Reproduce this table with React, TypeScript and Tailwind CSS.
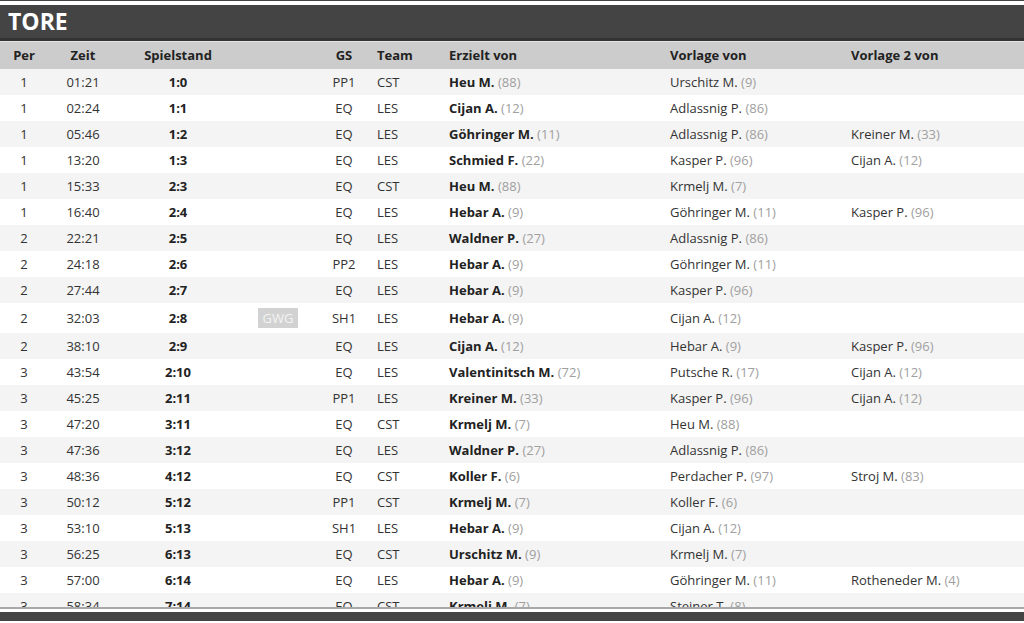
import React from "react";

type Player = [string, number];
type Goal = {
  per: number;
  time: string;
  score: string;
  gwg?: boolean;
  gs: string;
  team: string;
  scorer: Player;
  a1?: Player;
  a2?: Player;
};

const goals: Goal[] = [
  { per: 1, time: "01:21", score: "1:0", gs: "PP1", team: "CST", scorer: ["Heu M.", 88], a1: ["Urschitz M.", 9] },
  { per: 1, time: "02:24", score: "1:1", gs: "EQ", team: "LES", scorer: ["Cijan A.", 12], a1: ["Adlassnig P.", 86] },
  { per: 1, time: "05:46", score: "1:2", gs: "EQ", team: "LES", scorer: ["Göhringer M.", 11], a1: ["Adlassnig P.", 86], a2: ["Kreiner M.", 33] },
  { per: 1, time: "13:20", score: "1:3", gs: "EQ", team: "LES", scorer: ["Schmied F.", 22], a1: ["Kasper P.", 96], a2: ["Cijan A.", 12] },
  { per: 1, time: "15:33", score: "2:3", gs: "EQ", team: "CST", scorer: ["Heu M.", 88], a1: ["Krmelj M.", 7] },
  { per: 1, time: "16:40", score: "2:4", gs: "EQ", team: "LES", scorer: ["Hebar A.", 9], a1: ["Göhringer M.", 11], a2: ["Kasper P.", 96] },
  { per: 2, time: "22:21", score: "2:5", gs: "EQ", team: "LES", scorer: ["Waldner P.", 27], a1: ["Adlassnig P.", 86] },
  { per: 2, time: "24:18", score: "2:6", gs: "PP2", team: "LES", scorer: ["Hebar A.", 9], a1: ["Göhringer M.", 11] },
  { per: 2, time: "27:44", score: "2:7", gs: "EQ", team: "LES", scorer: ["Hebar A.", 9], a1: ["Kasper P.", 96] },
  { per: 2, time: "32:03", score: "2:8", gwg: true, gs: "SH1", team: "LES", scorer: ["Hebar A.", 9], a1: ["Cijan A.", 12] },
  { per: 2, time: "38:10", score: "2:9", gs: "EQ", team: "LES", scorer: ["Cijan A.", 12], a1: ["Hebar A.", 9], a2: ["Kasper P.", 96] },
  { per: 3, time: "43:54", score: "2:10", gs: "EQ", team: "LES", scorer: ["Valentinitsch M.", 72], a1: ["Putsche R.", 17], a2: ["Cijan A.", 12] },
  { per: 3, time: "45:25", score: "2:11", gs: "PP1", team: "LES", scorer: ["Kreiner M.", 33], a1: ["Kasper P.", 96], a2: ["Cijan A.", 12] },
  { per: 3, time: "47:20", score: "3:11", gs: "EQ", team: "CST", scorer: ["Krmelj M.", 7], a1: ["Heu M.", 88] },
  { per: 3, time: "47:36", score: "3:12", gs: "EQ", team: "LES", scorer: ["Waldner P.", 27], a1: ["Adlassnig P.", 86] },
  { per: 3, time: "48:36", score: "4:12", gs: "EQ", team: "CST", scorer: ["Koller F.", 6], a1: ["Perdacher P.", 97], a2: ["Stroj M.", 83] },
  { per: 3, time: "50:12", score: "5:12", gs: "PP1", team: "CST", scorer: ["Krmelj M.", 7], a1: ["Koller F.", 6] },
  { per: 3, time: "53:10", score: "5:13", gs: "SH1", team: "LES", scorer: ["Hebar A.", 9], a1: ["Cijan A.", 12] },
  { per: 3, time: "56:25", score: "6:13", gs: "EQ", team: "CST", scorer: ["Urschitz M.", 9], a1: ["Krmelj M.", 7] },
  { per: 3, time: "57:00", score: "6:14", gs: "EQ", team: "LES", scorer: ["Hebar A.", 9], a1: ["Göhringer M.", 11], a2: ["Rotheneder M.", 4] },
  { per: 3, time: "58:34", score: "7:14", gs: "EQ", team: "CST", scorer: ["Krmelj M.", 7], a1: ["Steiner T.", 8] },
];

function Name({ p, bold }: { p?: Player; bold?: boolean }) {
  if (!p) return null;
  return (
    <>
      <span className={bold ? "font-bold" : ""}>{p[0]}</span>{" "}
      <span className="text-[#a0a0a0]">({p[1]})</span>
    </>
  );
}

export default function App() {
  return (
    <div className="h-[623px] overflow-hidden bg-white font-['Open_Sans',sans-serif] text-[13px] text-[#333]">
      <div className="h-px bg-[#444]" />
      {/* section header */}
      <div className="mt-[4px] h-[33px] bg-[#444] pl-2 text-[23px] font-bold leading-[33px] text-white">
        TORE
      </div>
      <div className="h-[3px] bg-[#333]" />
      <div className="h-px bg-[#e2e2e2]" />

      <div className="h-[567px] overflow-hidden border-b-2 border-[#a8a8a8]">
        <table className="w-full table-fixed border-collapse">
          <colgroup>
            <col className="w-[48px]" />
            <col className="w-[70px]" />
            <col className="w-[120px]" />
            <col className="w-[80px]" />
            <col className="w-[52px]" />
            <col className="w-[72px]" />
            <col className="w-[221px]" />
            <col className="w-[181px]" />
            <col className="w-[180px]" />
          </colgroup>
          <thead>
            <tr className="bg-[#cccccc] font-bold text-[#222]">
              <th className="pt-[5px] pb-[6px] text-center leading-[16px]">Per</th>
              <th className="pt-[5px] pb-[6px] text-center leading-[16px]">Zeit</th>
              <th className="pt-[5px] pb-[6px] text-center leading-[16px]">Spielstand</th>
              <th className="pt-[5px] pb-[6px]" />
              <th className="pt-[5px] pb-[6px] text-center leading-[16px]">GS</th>
              <th className="pt-[5px] pb-[6px] pl-[7px] text-left leading-[16px]">Team</th>
              <th className="pt-[5px] pb-[6px] pl-[7px] text-left leading-[16px]">Erzielt von</th>
              <th className="pt-[5px] pb-[6px] pl-[7px] text-left leading-[16px]">Vorlage von</th>
              <th className="pt-[5px] pb-[6px] pl-[7px] text-left leading-[16px]">Vorlage 2 von</th>
            </tr>
          </thead>
          <tbody>
            {goals.map((g, i) => (
              <tr key={i} className={i % 2 === 0 ? "bg-[#f4f4f4]" : "bg-white"}>
                <td className="py-[5px] text-center leading-[16px]">{g.per}</td>
                <td className="py-[5px] text-center leading-[16px]">{g.time}</td>
                <td className="py-[5px] text-center font-bold leading-[16px] text-[#222]">{g.score}</td>
                <td className="py-[5px] text-center leading-[16px]">
                  {g.gwg && (
                    <span className="inline-block bg-[#d2d2d2] px-[5px] leading-[20px] text-[#f4f4f4]">GWG</span>
                  )}
                </td>
                <td className="py-[5px] text-center leading-[16px]">{g.gs}</td>
                <td className="py-[5px] pl-[7px] leading-[16px]">{g.team}</td>
                <td className="py-[5px] pl-[7px] leading-[16px] text-[#222]">
                  <Name p={g.scorer} bold />
                </td>
                <td className="py-[5px] pl-[7px] leading-[16px]">
                  <Name p={g.a1} />
                </td>
                <td className="py-[5px] pl-[7px] leading-[16px]">
                  <Name p={g.a2} />
                </td>
              </tr>
            ))}
          </tbody>
        </table>
      </div>

      <div className="mt-[3px] h-[9px] bg-[#444]" />
    </div>
  );
}
